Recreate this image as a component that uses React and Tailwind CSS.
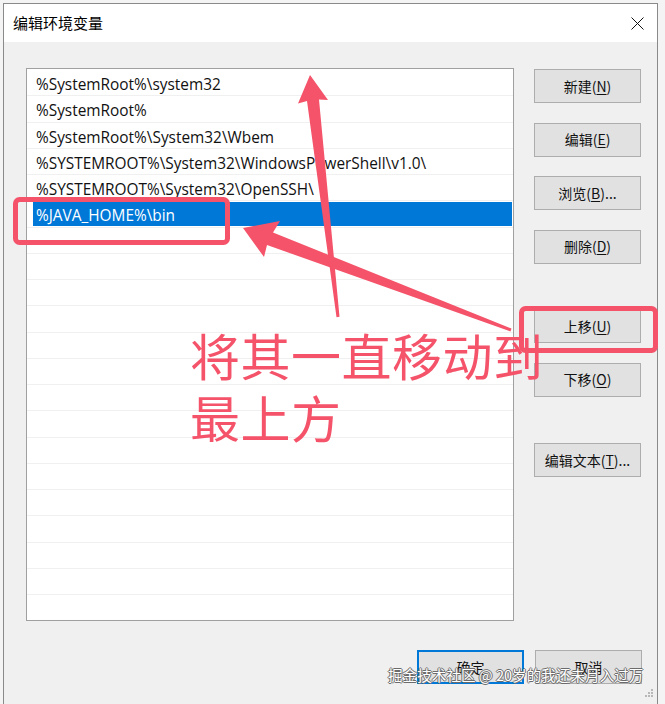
import React from "react";

const rows = [
  "%SystemRoot%\\system32",
  "%SystemRoot%",
  "%SystemRoot%\\System32\\Wbem",
  "%SYSTEMROOT%\\System32\\WindowsPowerShell\\v1.0\\",
  "%SYSTEMROOT%\\System32\\OpenSSH\\",
];

const emptyRows = Array.from({ length: 15 }, (_, i) => i);

function Btn({ label, hot, suffix = "", className = "" }) {
  return (
    <div
      className={
        "w-[107px] h-[34px] flex items-center justify-center bg-[#e1e1e1] border border-[#adadad] text-[14px] text-[#111] " +
        className
      }
    >
      <span>
        {label}(<span className="underline underline-offset-2">{hot}</span>){suffix}
      </span>
    </div>
  );
}

export default function App() {
  return (
    <div
      className="relative w-[665px] h-[704px] overflow-hidden bg-[#f4f4f4] flex pl-[3px] pt-[3px]"
      style={{ fontFamily: '"Noto Sans CJK SC", "Noto Sans", sans-serif' }}
    >
      {/* dialog window */}
      <div className="w-[655px] h-[701px] flex flex-col border-l border-r border-t border-[#8a8a8a] bg-[#f0f0f0]">
        {/* title bar */}
        <div className="h-[38px] bg-white flex items-center justify-between pl-[9px] pr-[13px]">
          <span className="text-[15px] text-black">编辑环境变量</span>
          <svg width="13" height="13" viewBox="0 0 13 13">
            <path d="M0.5 0.5 L12.5 12.5 M12.5 0.5 L0.5 12.5" stroke="#111" strokeWidth="1" />
          </svg>
        </div>

        {/* body */}
        <div className="flex-1 flex flex-col pt-[26px] pl-[22px] pr-[15px]">
          <div className="flex gap-[20px]">
            {/* list */}
            <div
              className="w-[488px] h-[553px] border border-[#a0a0a0] bg-white overflow-hidden pt-[1px]"
              style={{ fontFamily: '"Open Sans", "Noto Sans", sans-serif' }}
            >
              {rows.map((r) => (
                <div
                  key={r}
                  className="h-[26.25px] border-b border-[#f0f0f0] flex items-center pt-[4px] pl-[9px] text-[15.4px] text-[#111] whitespace-nowrap"
                >
                  {r}
                </div>
              ))}
              <div className="h-[26.25px] border-b border-[#f0f0f0] flex items-center pl-[6px] pr-[1px]">
                <div className="flex-1 h-[24px] bg-[#0078d7] flex items-center pt-[4px] pl-[3px] text-[15.4px] text-white whitespace-nowrap">
                  %JAVA_HOME%\bin
                </div>
              </div>
              {emptyRows.map((i) => (
                <div key={i} className="h-[26.25px] border-b border-[#f0f0f0]" />
              ))}
            </div>

            {/* side buttons */}
            <div className="w-[107px] flex flex-col pt-[1px]">
              <Btn label="新建" hot="N" />
              <Btn label="编辑" hot="E" className="mt-[19.5px]" />
              <Btn label="浏览" hot="B" suffix="..." className="mt-[19.5px]" />
              <Btn label="删除" hot="D" className="mt-[19.5px]" />
              <Btn label="上移" hot="U" className="mt-[45.5px]" />
              <Btn label="下移" hot="O" className="mt-[19.5px]" />
              <Btn label="编辑文本" hot="T" suffix="..." className="mt-[46.5px]" />
            </div>
          </div>

          {/* footer */}
          <div className="mt-[29px] flex justify-end gap-[11px]">
            <div className="w-[107px] h-[34px] flex items-center justify-center bg-[#e1e1e1] border-2 border-[#0078d7] text-[14px] text-[#111]">
              确定
            </div>
            <div className="w-[107px] h-[34px] flex items-center justify-center bg-[#e1e1e1] border border-[#adadad] text-[14px] text-[#111]">
              取消
            </div>
          </div>
        </div>
      </div>

      {/* resize grip */}
      <svg className="absolute left-[642px] top-[688px]" width="12" height="12" viewBox="0 0 12 12">
        <g fill="#b8b8b8">
          <rect x="9" y="1" width="2" height="2" />
          <rect x="6" y="4" width="2" height="2" />
          <rect x="9" y="4" width="2" height="2" />
          <rect x="3" y="7" width="2" height="2" />
          <rect x="6" y="7" width="2" height="2" />
          <rect x="9" y="7" width="2" height="2" />
        </g>
      </svg>

      {/* annotation drawings */}
      <svg className="absolute left-0 top-0 pointer-events-none" width="665" height="704" viewBox="0 0 665 704">
        <g fill="none" stroke="#f4536a" strokeWidth="5" strokeLinejoin="round">
          <rect x="15.5" y="199.5" width="212" height="43" rx="4" />
          <rect x="521.5" y="308.5" width="134" height="42" rx="4" />
        </g>
        <g fill="#f4536a">
          <polygon points="310,75 328,100 319,99.5 339.5,316.8 336.5,317.2 307,101 298,103.5" />
          <polygon points="243,228 280,221 273,232.5 511.5,328.6 510.5,331.4 267,245 264,257" />
        </g>
      </svg>

      {/* annotation text */}
      <div className="absolute left-[190px] top-[323px] text-[50px] tracking-[0.5px] leading-[62px] text-[#f4536a] whitespace-nowrap pointer-events-none">
        <div>将其一直移动到</div>
        <div>最上方</div>
      </div>

      {/* watermark */}
      <div className="absolute left-[388px] top-[665px] text-[14.6px] leading-[20px] text-white whitespace-nowrap pointer-events-none [text-shadow:1px_0_0_#6b6b6b,-1px_0_0_#6b6b6b,0_1px_0_#6b6b6b,0_-1px_0_#6b6b6b]">
        掘金技术社区 @ 20岁的我还未月入过万
      </div>
    </div>
  );
}
